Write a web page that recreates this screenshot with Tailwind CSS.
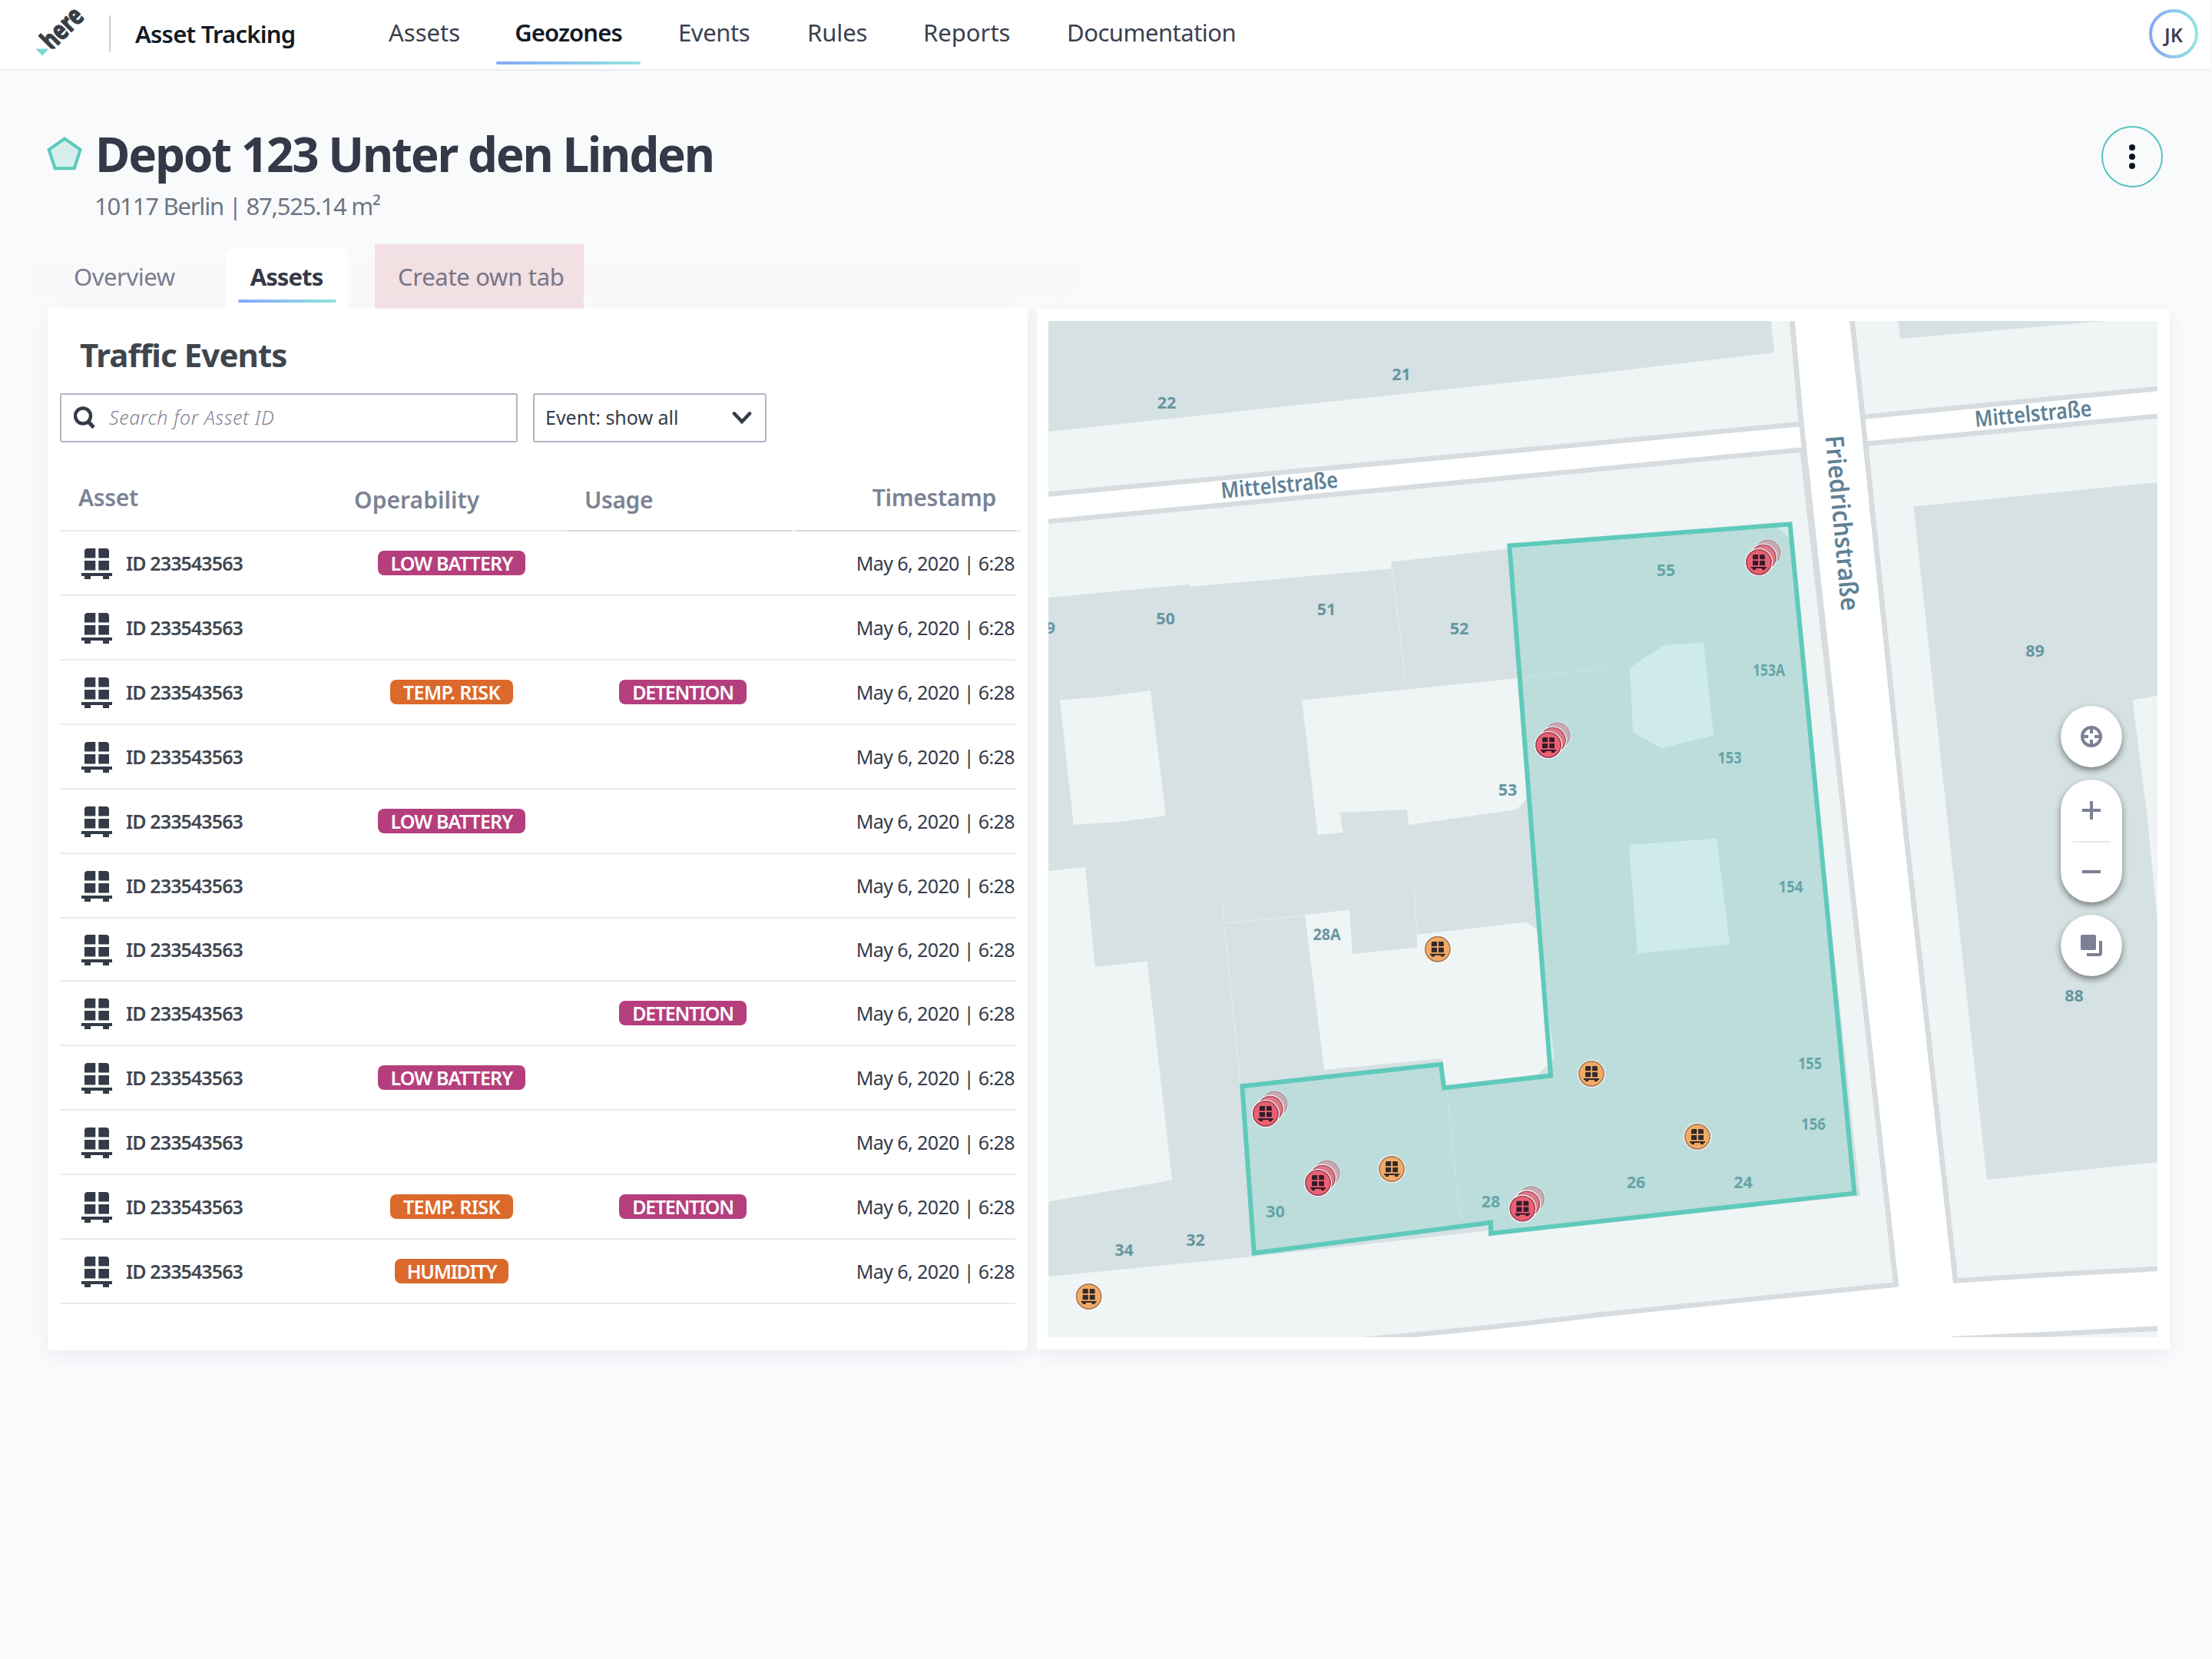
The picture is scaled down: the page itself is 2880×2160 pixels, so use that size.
<!DOCTYPE html>
<html lang="en">
<head>
<meta charset="utf-8">
<title>Asset Tracking – Geozones</title>
<script src="https://cdn.jsdelivr.net/npm/@tailwindcss/browser@4"></script>
</head>
<body class="h-[2160px] w-[2880px] overflow-hidden bg-[#f9fafc] font-['Noto_Sans',sans-serif] text-[#363b49]">

<svg class="hidden">
  <symbol id="pallet" viewBox="0 0 40 40">
    <path d="M8 0H18.3V12.4H4V4A4 4 0 0 1 8 0ZM22.3 0H32A4 4 0 0 1 36 4V12.4H22.3ZM4 16H18.3V28.4H4ZM22.3 16H36V28.4H22.3ZM0 32H40V36H36V40H28V36H12V40H4V36H0Z" fill="currentColor"/>
  </symbol>
  <symbol id="alert" viewBox="-18 -30 50 50" overflow="visible">
    <g opacity=".42"><circle cx="11.7" cy="-12.5" r="17.4" fill="#dc6478" stroke="#fff" stroke-width="1.4"/><circle cx="11.7" cy="-12.5" r="16.2" fill="none" stroke="#9c4557" stroke-width="1.5"/></g>
    <circle cx="5.9" cy="-6.2" r="17.4" fill="#dd7886" stroke="#fff" stroke-width="1.4"/><circle cx="5.9" cy="-6.2" r="16.2" fill="none" stroke="#a55767" stroke-width="1.5"/>
    <circle r="17.4" fill="#eb6172" stroke="#fff" stroke-width="1.4"/><circle r="16.1" fill="none" stroke="#a04459" stroke-width="1.7"/>
    <use href="#pallet" x="-10" y="-10" width="20" height="20" class="text-[#341b2b]"/>
  </symbol>
  <symbol id="warn" viewBox="-18 -18 36 36" overflow="visible">
    <circle r="17.4" fill="#f2aa66" stroke="#fff" stroke-width="1.4"/><circle r="16.1" fill="none" stroke="#a67e5e" stroke-width="1.7"/>
    <use href="#pallet" x="-10" y="-10" width="20" height="20" class="text-[#33292a]"/>
  </symbol>
</svg>

<!-- top bar -->
<header class="flex h-[92px] w-[2878px] items-start border-b-2 border-[#e9ebf0] bg-white pr-4">
  <svg class="h-[90px] w-[142px] shrink-0" viewBox="0 0 142 90">
    <defs><clipPath id="cut"><rect width="142" height="63.5"/></clipPath></defs>
    <g clip-path="url(#cut)"><text transform="translate(67.5 67) rotate(-45)" font-size="35" font-weight="800" fill="#383c45" stroke="#383c45" stroke-width="1" textLength="62" lengthAdjust="spacingAndGlyphs">here</text></g>
    <path d="M46.5 63.5H63.5L55 72.4Z" fill="#78d9d1"/>
  </svg>
  <div class="mt-5 h-12 w-[2px] bg-[#cdd0dc]"></div>
  <div class="ml-[32px] w-[330px] text-[31px] leading-[88px] font-semibold tracking-[-0.75px] text-[#131a26]">Asset Tracking</div>
  <nav class="flex text-[31px] leading-[84px] whitespace-nowrap text-[#3a404e]">
    <a class="w-[140px]">Assets</a>
    <a class="relative h-[84px] w-[188px] text-center font-semibold tracking-[-0.9px] text-[#131a26]">Geozones<span class="absolute bottom-0 left-0 h-1 w-full rounded-sm bg-linear-to-r from-[#86a6fa] to-[#92e4dc]"></span></a>
    <a class="ml-[49px] w-[168px] tracking-[-0.4px]">Events</a>
    <a class="w-[151px] tracking-[-0.1px]">Rules</a>
    <a class="w-[187px]">Reports</a>
    <a class="tracking-[-0.5px]">Documentation</a>
  </nav>
  <div class="relative mt-3 ml-auto size-16">
    <svg viewBox="0 0 64 64" class="size-16"><defs><linearGradient id="ring"><stop stop-color="#86a6fa"/><stop offset="1" stop-color="#92e6dc"/></linearGradient></defs><circle cx="32" cy="32" r="30" fill="none" stroke="url(#ring)" stroke-width="4"/></svg>
    <span class="absolute inset-0 text-center text-[25px] leading-[66px] font-semibold text-[#3a404e]">JK</span>
  </div>
</header>

<main class="pl-[62px]">
  <div class="flex h-[148px] items-end">
    <svg class="mb-[17px] -ml-[2px] h-[46px] w-[48px]" viewBox="60 177 48 46"><path d="M84.2 180.5L104.6 194.8L96.8 219.2H71.6L63.7 194.8Z" fill="#d6efec" stroke="#5ccabb" stroke-width="4"/></svg>
    <h1 class="ml-[16px] text-[62px] leading-[80px] font-bold tracking-[-2.25px] text-[#343847]">Depot 123 Unter den Linden</h1>
    <button class="mr-[64px] mb-[-4px] ml-auto flex size-20 flex-col items-center justify-center gap-1 rounded-full border-2 border-[#56c4c0]">
      <span class="size-2 rounded-full bg-[#0b1222]"></span><span class="size-2 rounded-full bg-[#0b1222]"></span><span class="size-2 rounded-full bg-[#0b1222]"></span>
    </button>
  </div>
  <p class="mt-2 ml-[61px] h-[40px] text-[31px] leading-[40px] tracking-[-1.2px] text-[#6f7582]">10117 Berlin | 87,525.14 m²</p>

  <!-- tabs -->
  <div class="relative mt-[30px] flex h-[82px] text-[31px] whitespace-nowrap">
    <div class="absolute top-5 -left-[27px] h-[50px] w-[1375px] rounded-3xl bg-[#f9f9fb]"></div>
    <a class="relative mt-1 w-[232px] pl-[34px] leading-[77px] tracking-[-0.45px] text-[#787d8d]">Overview</a>
    <a class="relative mt-1 h-[78px] w-[160px] rounded-t-2xl bg-white pr-[2px] text-center leading-[77px] font-bold tracking-[-0.9px] text-[#343a47]">Assets<span class="absolute bottom-[6px] left-4 h-1 w-32 rounded-sm bg-linear-to-r from-[#86a6fa] to-[#92e4dc]"></span></a>
    <a class="relative z-10 ml-[34px] h-[84px] w-[272px] bg-[#ca525f]/15 pl-[30px] leading-[85px] tracking-[-0.3px] text-[#787587]">Create own tab</a>
  </div>

  <div class="flex gap-3">
    <!-- events table -->
    <section class="h-[1358px] w-[1276px] rounded-md bg-white px-4 pt-[34px] shadow-[0_6px_20px_rgba(40,50,80,0.07)]">
      <h2 class="ml-[26px] text-[42px] leading-[56px] font-bold tracking-[-0.9px] text-[#40454d]">Traffic Events</h2>
      <div class="mt-[22px] flex gap-5">
        <label class="flex h-16 w-[596px] items-center rounded-[3px] border-2 border-[#b3b6c4] pl-4">
          <svg class="h-[30px] w-[30px]" viewBox="0 0 30 30" fill="none" stroke="#343a47"><circle cx="12" cy="12.5" r="10" stroke-width="4.4"/><path d="M19 20L26 27.5" stroke-width="5"/></svg>
          <span class="mb-[2px] ml-[16px] text-[25px] leading-[58px] font-light tracking-[0.6px] text-[#7f8594] italic">Search for Asset ID</span>
        </label>
        <div class="flex h-16 w-[304px] items-center rounded-[3px] border-2 border-[#b3b6c4] pr-[17px] pl-[14px]">
          <span class="mb-[2px] text-[25px] leading-[58px]">Event: show all</span>
          <svg class="ml-auto h-[18px] w-[26px]" viewBox="0 0 26 18" fill="none" stroke="#343a47" stroke-width="4.6"><path d="M3 3.5L13 14L23 3.5" stroke-linecap="round"/></svg>
        </div>
      </div>
      <div class="mt-[45px] grid h-[69px] grid-cols-[360px_300px_302px_282px] text-[30px] leading-[54px] font-semibold text-[#7b8394]">
        <div class="pl-6 tracking-[-0.3px]">Asset</div>
        <div class="pt-[3px] pl-[23px] tracking-[0.05px]">Operability</div>
        <div class="pt-[3px] pl-[23px] tracking-[-0.4px]">Usage</div>
        <div class="pr-[25px] text-right tracking-[-0.3px]">Timestamp</div>
      </div>
      <div class="flex h-[2px] w-[1252px] bg-[#e8ebef]"><span class="ml-[660px] w-[292px] bg-[#d3d6e2]"></span><span class="ml-2 w-[284px] bg-[#d3d6e2]"></span></div>
      <div id="rows"></div>
    </section>

    <!-- map -->
    <section class="mt-[2px] h-[1355px] w-[1475px] bg-white pt-4 pl-[15px] shadow-[0_6px_20px_rgba(40,50,80,0.07)]">
      <div class="relative h-[1323px] w-[1444px] overflow-hidden">
        <svg class="block h-[1323px] w-[1444px]" viewBox="1365 418 1444 1323">
          <rect x="1365" y="418" width="1444" height="1323" fill="#fff"/>
          <g fill="#eff4f5" stroke="#d6dcdf" stroke-width="6.5">
            <path d="M1350 400H2332L2345 552L1350 645Z"/>
            <path d="M2409.5 400L2425.6 542.7L2820 505V400Z"/>
            <path d="M1350 680.5L2346.5 585.5L2404 1090L2468.5 1672.5L2080 1712Q1950 1728 1802 1741.5L1350 1785Z"/>
            <path d="M2429 577.8L2820 540.8V1651.5Q2680 1658 2546 1667.5L2482 1090Z"/>
            <path d="M2545 1743Q2680 1737 2820 1729V1760H2540Z"/>
          </g>
          <path d="M2331.5 400L2345.6 553L2404 1090L2468.5 1672.5M2409.5 400L2425.3 544L2482 1090L2546 1667.5" fill="none" stroke="#d6dcdf" stroke-width="6.5"/>
          <g fill="#d6e1e3">
            <path d="M1365 418H2306L2310 459L2080 486L1825 513L1365 562Z"/>
            <path d="M2471 418L2474 441L2740 418Z"/>
            <path d="M1365 778L1547.5 761L1548.5 764L1728 748L1811 740.5L1812 731.5L1963 714.5L2313 686L2330 700L2422 1557L1941 1602L1631 1636L1365 1662Z"/>
            <path d="M2491.5 659.6L2809 628V1513L2587 1536L2538 1090Z"/>
          </g>
          <g fill="#eff4f5">
            <path d="M1380 911.5L1439 907L1498 899L1518 1062L1459 1070L1397.7 1074Z"/>
            <path d="M1695 911.5L1976 883L1987.6 1039.5L1975 1054L1834 1074L1832 1054L1745 1058L1748.6 1084L1715.7 1087Z"/>
            <path d="M1365 1134L1413 1129L1426 1259L1493.7 1251.6L1526 1536.5L1365 1564.6Z"/>
            <path d="M1699 1191L1757 1184.6L1761 1242L1845 1233.5V1216.7L1988.6 1200.4L2002 1211.8L2024 1378L2002 1399L1880.5 1413L1878 1378L1724 1393Z"/>
            <path d="M2122 869L2167 840L2218 836.4L2231 957.4L2163 974L2126 953.4Z"/>
            <path d="M2120.7 1100L2235 1091.7L2252 1229.4L2132 1241.6Z"/>
            <path d="M2776.5 911.5L2809 906V1201L2796.4 1070Z"/>
          </g>
          <path d="M1812.6 740L1830.5 892M1591 1174L1615 1412M1595.5 1202L1699 1192M1841 1156L1845 1217M1884 1419L1901 1586M1980 882L2097 870" fill="none" stroke="#dfe8ea" stroke-width="1.8"/>
          <g font-size="21.5" font-weight="700" fill="#6696a1" text-anchor="middle">
            <text x="1519" y="532.4">22</text><text x="1824.5" y="494.5">21</text><text x="1517.5" y="813">50</text><text x="1727" y="800.7">51</text><text x="1900" y="825.7">52</text><text x="1368" y="825">9</text><text x="1963" y="1035.5">53</text>
            <text x="2169" y="750">55</text><text x="2303" y="880" textLength="42" lengthAdjust="spacingAndGlyphs">153A</text><text x="2252" y="993.6" textLength="31" lengthAdjust="spacingAndGlyphs">153</text><text x="2649.5" y="855">89</text><text x="2331.5" y="1161.5" textLength="32" lengthAdjust="spacingAndGlyphs">154</text><text x="2356.5" y="1392" textLength="31" lengthAdjust="spacingAndGlyphs">155</text><text x="2361" y="1471" textLength="32" lengthAdjust="spacingAndGlyphs">156</text><text x="2700.5" y="1304">88</text>
            <text x="2130" y="1547">26</text><text x="2269.5" y="1547">24</text><text x="1941" y="1572">28</text><text x="1660.5" y="1584.5">30</text><text x="1556.5" y="1622">32</text><text x="1463.5" y="1635">34</text><text x="1727.5" y="1224" textLength="36" lengthAdjust="spacingAndGlyphs">28A</text>
          </g>
          <g font-weight="600" fill="#608196" stroke="#fff" stroke-width="3" paint-order="stroke">
            <text transform="translate(1590.5 649) rotate(-5.4)" font-size="29" textLength="153" lengthAdjust="spacingAndGlyphs">Mittelstraße</text>
            <text transform="translate(2572 556) rotate(-5.4)" font-size="29" textLength="153" lengthAdjust="spacingAndGlyphs">Mittelstraße</text>
            <text transform="translate(2376.5 568) rotate(84.7)" font-size="33" textLength="229" lengthAdjust="spacingAndGlyphs">Friedrichstraße</text>
          </g>
          <path d="M1965.3 710.5L2330.6 682.4L2414.5 1553.7L1941 1605.8V1591.7L1632.8 1631.6L1617.3 1414.2L1876 1385.7L1880 1416.5L2019 1400.6Z" fill="#6ad0c6" fill-opacity=".24" stroke="#5fcabb" stroke-width="6"/>
          <use href="#warn" x="1853.8" y="1217.8" width="36" height="36"/>
          <use href="#warn" x="2054" y="1380" width="36" height="36"/>
          <use href="#warn" x="1794" y="1504" width="36" height="36"/>
          <use href="#warn" x="1399.6" y="1670" width="36" height="36"/>
          <use href="#warn" x="2192" y="1462" width="36" height="36"/>
          <use href="#alert" x="1998" y="940" width="50" height="50"/>
          <use href="#alert" x="2272" y="702" width="50" height="50"/>
          <use href="#alert" x="1629.8" y="1420" width="50" height="50"/>
          <use href="#alert" x="1698" y="1510" width="50" height="50"/>
          <use href="#alert" x="1964.3" y="1543.6" width="50" height="50"/>
        </svg>
        <!-- map controls -->
        <div class="absolute top-[501px] right-[46px] flex w-20 flex-col gap-4 text-[#7b8094]">
          <button class="flex size-20 items-center justify-center rounded-full bg-white shadow-[0_4px_8px_rgba(0,0,0,0.45)]">
            <svg class="size-7" viewBox="0 0 28 28" fill="none" stroke="currentColor" stroke-width="4"><circle cx="14" cy="14" r="12"/><path d="M14 2V10M14 18V26M2 14H10M18 14H26"/></svg>
          </button>
          <div class="flex h-40 flex-col items-center rounded-full bg-white shadow-[0_4px_8px_rgba(0,0,0,0.45)]">
            <svg class="mt-7 size-6" viewBox="0 0 24 24" fill="none" stroke="currentColor" stroke-width="4"><path d="M12 0V24M0 12H24"/></svg>
            <div class="mt-[28px] h-[2px] w-12 bg-[#e6e8ee]"></div>
            <svg class="mt-[26px] size-6" viewBox="0 0 24 24" fill="none" stroke="currentColor" stroke-width="4"><path d="M0 12H24"/></svg>
          </div>
          <button class="flex size-20 items-center justify-center rounded-full bg-white shadow-[0_4px_8px_rgba(0,0,0,0.45)]">
            <svg class="size-7" viewBox="0 0 28 28"><rect width="20" height="20" rx="2" fill="currentColor"/><path d="M26 8V24Q26 26 24 26H8" fill="none" stroke="currentColor" stroke-width="4"/></svg>
          </button>
        </div>
      </div>
    </section>
  </div>
</main>

<script>
const badge = {
  L: '<span class="flex h-8 w-[192px] items-center justify-center rounded-[8px] bg-[#b53f7d] tracking-[-0.85px]">LOW BATTERY</span>',
  T: '<span class="flex h-8 w-[160px] items-center justify-center rounded-[8px] bg-[#db692c] tracking-[-0.6px]">TEMP. RISK</span>',
  H: '<span class="flex h-8 w-[148px] items-center justify-center rounded-[8px] bg-[#db692c] tracking-[-1.3px]">HUMIDITY</span>',
  D: '<span class="flex h-8 w-[166px] items-center justify-center rounded-[8px] bg-[#b53f7d] tracking-[-1.3px]">DETENTION</span>',
  '-': ''
};
document.getElementById('rows').innerHTML = ['L-', '--', 'TD', '--', 'L-', '--', '--', '-D', 'L-', '--', 'TD', 'H-'].map((r, i) => `
  <div class="${i === 6 ? 'h-[82px]' : 'h-[84px]'} grid w-[1244px] grid-cols-[360px_300px_302px_282px] items-center border-b-2 border-[#e8ebef] pb-px text-[25px] leading-8 whitespace-nowrap">
    <div class="flex items-center pl-7"><svg class="mt-[2px] size-10 text-[#343a47]"><use href="#pallet"/></svg><span class="ml-[18px] font-semibold tracking-[-0.9px] text-[#42464f]">ID 233543563</span></div>
    <div class="flex justify-center font-semibold text-white">${badge[r[0]]}</div>
    <div class="flex justify-center font-semibold text-white">${badge[r[1]]}</div>
    <div class="pr-px text-right tracking-[-0.6px]">May 6, 2020 | 6:28</div>
  </div>`).join('');
</script>
</body>
</html>
